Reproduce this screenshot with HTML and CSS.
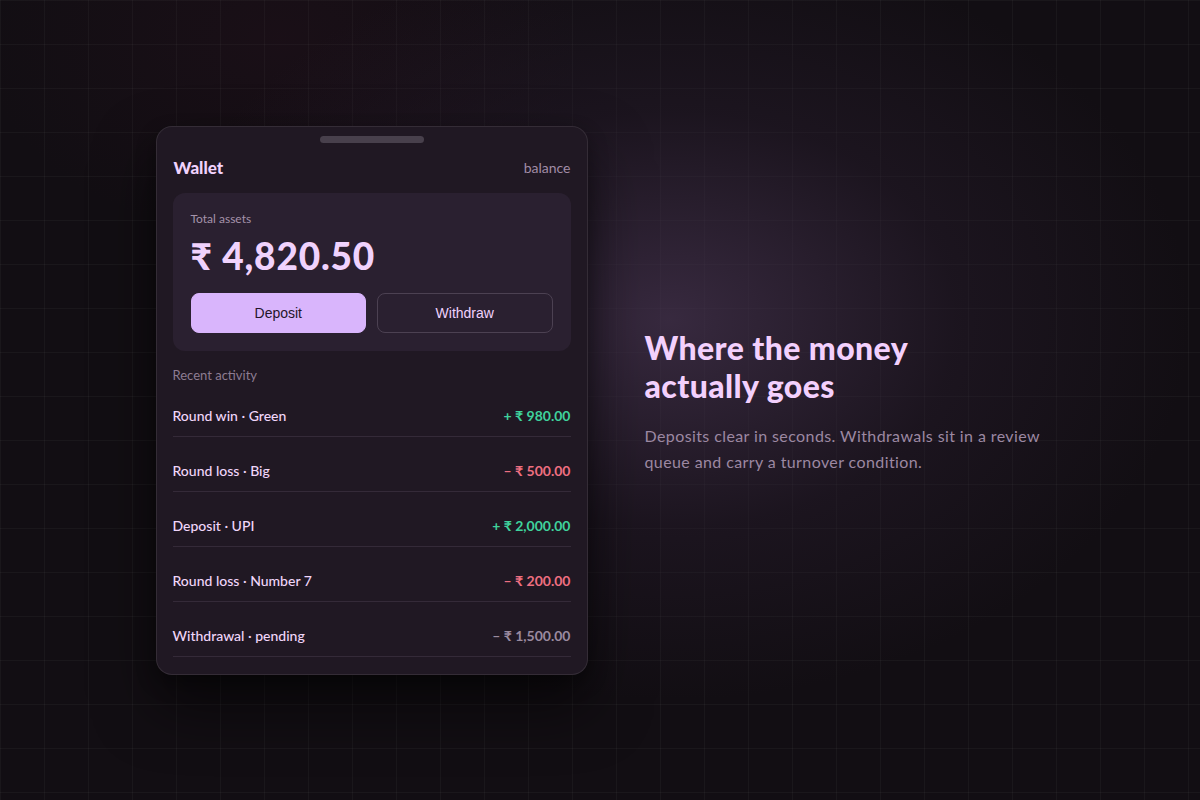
FILE: index.html
```html
<!DOCTYPE html>
<html lang="en">
<head>
<meta charset="utf-8">
<title>Wallet</title>
<link rel="stylesheet" href="styles.css">
</head>
<body>
<main class="stage">
  <section class="wallet">
    <div class="handle"></div>
    <header class="wallet-head">
      <h2 class="wallet-title">Wallet</h2>
      <span class="wallet-tag">balance</span>
    </header>
    <div class="assets">
      <div class="assets-label">Total assets</div>
      <div class="assets-value">₹ 4,820.50</div>
      <div class="actions">
        <button class="btn btn-primary">Deposit</button>
        <button class="btn btn-ghost">Withdraw</button>
      </div>
    </div>
    <div class="activity-label">Recent activity</div>
    <ul class="activity">
      <li class="row"><span class="row-name">Round win · Green</span><span class="amt amt-in">+ ₹ 980.00</span></li>
      <li class="row"><span class="row-name">Round loss · Big</span><span class="amt amt-out">– ₹ 500.00</span></li>
      <li class="row"><span class="row-name">Deposit · UPI</span><span class="amt amt-in">+ ₹ 2,000.00</span></li>
      <li class="row"><span class="row-name">Round loss · Number 7</span><span class="amt amt-out">– ₹ 200.00</span></li>
      <li class="row"><span class="row-name">Withdrawal · pending</span><span class="amt amt-pending">– ₹ 1,500.00</span></li>
    </ul>
  </section>
  <section class="copy">
    <h1 class="copy-title">Where the money<br>actually goes</h1>
    <p class="copy-text">Deposits clear in seconds. Withdrawals sit in a review queue and carry a turnover condition.</p>
  </section>
</main>
</body>
</html>
```
FILE: styles.css
```css
* { box-sizing: border-box; }

html, body {
  margin: 0;
  height: 100%;
}

body {
  font-family: "Lato", "Noto Sans", "DejaVu Sans", sans-serif;
  color: #f0d2fd;
  background-color: #120e13;
  background-image:
    radial-gradient(ellipse 520px 380px at 670px 320px, rgba(70, 52, 80, 0.72), rgba(42, 30, 48, 0.4) 55%, rgba(18, 14, 19, 0) 100%),
    radial-gradient(ellipse 300px 200px at 280px 40px, rgba(60, 20, 40, 0.18), rgba(18, 14, 19, 0) 100%),
    linear-gradient(to right, rgba(255, 255, 255, 0.035) 1px, transparent 1px),
    linear-gradient(to bottom, rgba(255, 255, 255, 0.035) 1px, transparent 1px);
  background-size: auto, auto, 44px 44px, 44px 44px;
  overflow: hidden;
}

.stage {
  height: 800px;
  display: flex;
  align-items: center;
  justify-content: center;
  gap: 57px;
}

/* wallet sheet */
.wallet {
  width: 432px;
  padding: 9px 16px 17px;
  background: #201823;
  border: 1px solid rgba(255, 255, 255, 0.09);
  border-radius: 16px;
  box-shadow: 0 30px 60px rgba(0, 0, 0, 0.55), 0 8px 20px rgba(0, 0, 0, 0.3);
}

.handle {
  width: 104px;
  height: 7px;
  margin: 0 auto;
  border-radius: 4px;
  background: #48404c;
}

.wallet-head {
  display: flex;
  justify-content: space-between;
  align-items: center;
  margin: 14px 0;
  padding-left: 1px;
}

.wallet-title {
  margin: 0;
  font-size: 17px;
  font-weight: 900;
  line-height: 22px;
}

.wallet-tag {
  font-size: 14px;
  color: #a08ca6;
}

.assets {
  background: #2a2030;
  border-radius: 12px;
  padding: 18px;
}

.assets-label {
  font-size: 12px;
  color: #a593aa;
  line-height: 16px;
}

.assets-value {
  margin-top: 7px;
  font-size: 37px;
  font-weight: 900;
  line-height: 44px;
  letter-spacing: 0.8px;
}

.actions {
  display: flex;
  gap: 11px;
  margin-top: 15px;
}

.btn {
  flex: 1;
  height: 40px;
  border-radius: 8px;
  font-family: "Liberation Sans", Arial, sans-serif;
  font-size: 14px;
}

.btn-primary {
  background: #d9b5fc;
  border: 1px solid #d9b5fc;
  color: #24162a;
}

.btn-ghost {
  background: transparent;
  border: 1px solid #4c4152;
  color: #f0d2fd;
}

.activity-label {
  margin: 15px 0 0;
  font-size: 13px;
  color: #8d7c92;
  line-height: 18px;
}

.activity {
  list-style: none;
  margin: 0;
  padding: 0;
}

.row {
  display: flex;
  justify-content: space-between;
  align-items: center;
  height: 55px;
  padding-top: 13px;
  border-bottom: 1px solid #342a38;
  font-size: 14px;
}

.row:first-child {
  height: 53px;
  padding-top: 11px;
}

.row-name {
  color: #f0d6fa;
  font-weight: 500;
}

.amt {
  font-weight: 700;
}

.amt-in { color: #3fd29c; }
.amt-out { color: #ee6f80; }
.amt-pending { color: #9a8a9f; }

/* side copy */
.copy {
  width: 400px;
  padding-top: 4px;
}

.copy-title {
  margin: 0;
  font-size: 32px;
  font-weight: 900;
  line-height: 38px;
  letter-spacing: 0.4px;
  color: #f3d0fd;
}

.copy-text {
  margin: 18px 0 0;
  font-size: 16px;
  line-height: 26px;
  letter-spacing: 0.4px;
  color: #9c88a2;
}
```
